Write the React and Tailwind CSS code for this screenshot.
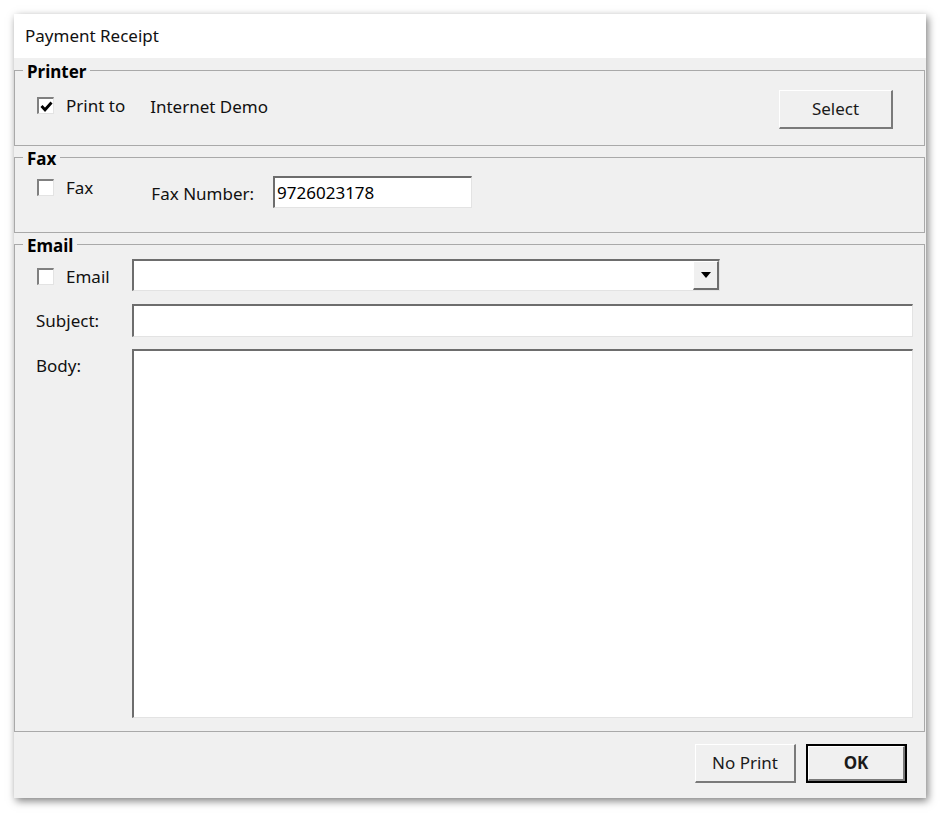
import React from 'react';

const font = { fontFamily: '"Noto Sans", "Liberation Sans", sans-serif' };

function CheckBox({ checked }) {
  return (
    <div className="w-[17px] h-[17px] bg-white border-t-2 border-l-2 border-b border-r border-t-[#808080] border-l-[#808080] border-b-[#e3e3e3] border-r-[#e3e3e3] flex items-center justify-center">
      {checked && (
        <svg width="13" height="13" viewBox="0 0 13 13">
          <path d="M1.5 6 L5 9.8 L11.5 2.5" fill="none" stroke="#000" strokeWidth="2.8" />
        </svg>
      )}
    </div>
  );
}

function RaisedButton({ children, className = '', bold = false, def = false }) {
  return (
    <div className={`${def ? 'border-2 border-black p-0' : ''} ${className}`}>
      <div
        className={`w-full h-full flex items-center justify-center bg-[#f0f0f0] border-t border-l border-b-2 border-r-2 border-t-white border-l-white border-b-[#7a7a7a] border-r-[#7a7a7a] text-[17px] text-[#1a1a1a] ${bold ? 'font-bold' : ''}`}
      >
        {children}
      </div>
    </div>
  );
}

function Sunken({ className = '', children }) {
  return (
    <div className={`bg-white border-t-2 border-l-2 border-b border-r border-t-[#6d6d6d] border-l-[#6d6d6d] border-b-[#e3e3e3] border-r-[#e3e3e3] ${className}`}>
      {children}
    </div>
  );
}

function Group({ title, className = '', children }) {
  return (
    <fieldset className={`border border-[#a9a9a9] mr-[1px] ${className}`}>
      <legend className="ml-[8px] px-[4px] text-[17px] leading-[18px] font-bold text-black">
        <span className="relative top-[2px]">{title}</span>
      </legend>
      {children}
    </fieldset>
  );
}

export default function App() {
  return (
    <div className="min-h-screen bg-white p-[14px]" style={font}>
      <div className="w-[912px] h-[784px] bg-[#f0f0f0] shadow-[2px_3px_8px_rgba(0,0,0,0.5)] flex flex-col">
        <div className="h-[44px] bg-white flex items-center pl-[11px] text-[17px] text-[#111]">
          Payment Receipt
        </div>

        <Group title="Printer" className="mt-[3px]">
          <div className="h-[66px] flex items-start pl-[22px] pr-[31px] text-[17px] text-[#111]">
            <div className="mt-[18px] flex items-center">
              <CheckBox checked />
              <span className="ml-[12px] leading-[17px]">Print to</span>
            </div>
            <span className="ml-[25px] mt-[15px]">Internet Demo</span>
            <div className="flex-1" />
            <RaisedButton className="mt-[11px] w-[114px] h-[39px]">Select</RaisedButton>
          </div>
        </Group>

        <Group title="Fax" className="mt-[2px]">
          <div className="h-[66px] flex items-start pl-[22px] text-[17px] text-[#111]">
            <div className="mt-[13px] flex items-center">
              <CheckBox />
              <span className="ml-[12px] leading-[17px]">Fax</span>
            </div>
            <span className="ml-[58px] mt-[15px]">Fax Number:</span>
            <Sunken className="ml-[19px] mt-[10px] w-[199px] h-[32px] flex items-center pl-[2px]">
              <span className="text-[17px] text-black">9726023178</span>
            </Sunken>
          </div>
        </Group>

        <Group title="Email" className="mt-[2px]">
          <div className="h-[478px] flex flex-col pl-[21px] pr-[11px] text-[17px] text-[#111]">
            <div className="flex items-start mt-[6px]">
              <div className="w-[96px] mt-[9px] flex items-center pl-[1px]">
                <CheckBox />
                <span className="ml-[12px] leading-[17px]">Email</span>
              </div>
              <Sunken className="w-[588px] h-[32px] flex justify-end">
                <div className="w-[26px] h-full bg-[#f0f0f0] border-t border-l border-b-2 border-r-2 border-t-white border-l-white border-b-[#6d6d6d] border-r-[#6d6d6d] flex items-center justify-center">
                  <svg width="10" height="6" viewBox="0 0 10 6">
                    <path d="M0 0 H10 L5 6 Z" fill="#000" />
                  </svg>
                </div>
              </Sunken>
            </div>
            <div className="flex items-start mt-[13px]">
              <span className="w-[96px] mt-[4px]">Subject:</span>
              <Sunken className="flex-1 h-[33px]" />
            </div>
            <div className="flex items-start mt-[12px] flex-1 mb-[13px]">
              <span className="w-[96px] mt-[4px]">Body:</span>
              <Sunken className="flex-1 h-full" />
            </div>
          </div>
        </Group>

        <div className="flex-1 flex items-start justify-end pr-[19px] pt-[12px]">
          <RaisedButton className="w-[101px] h-[39px]">No Print</RaisedButton>
          <RaisedButton className="ml-[10px] w-[101px] h-[39px]" bold def>OK</RaisedButton>
        </div>
      </div>
    </div>
  );
}
